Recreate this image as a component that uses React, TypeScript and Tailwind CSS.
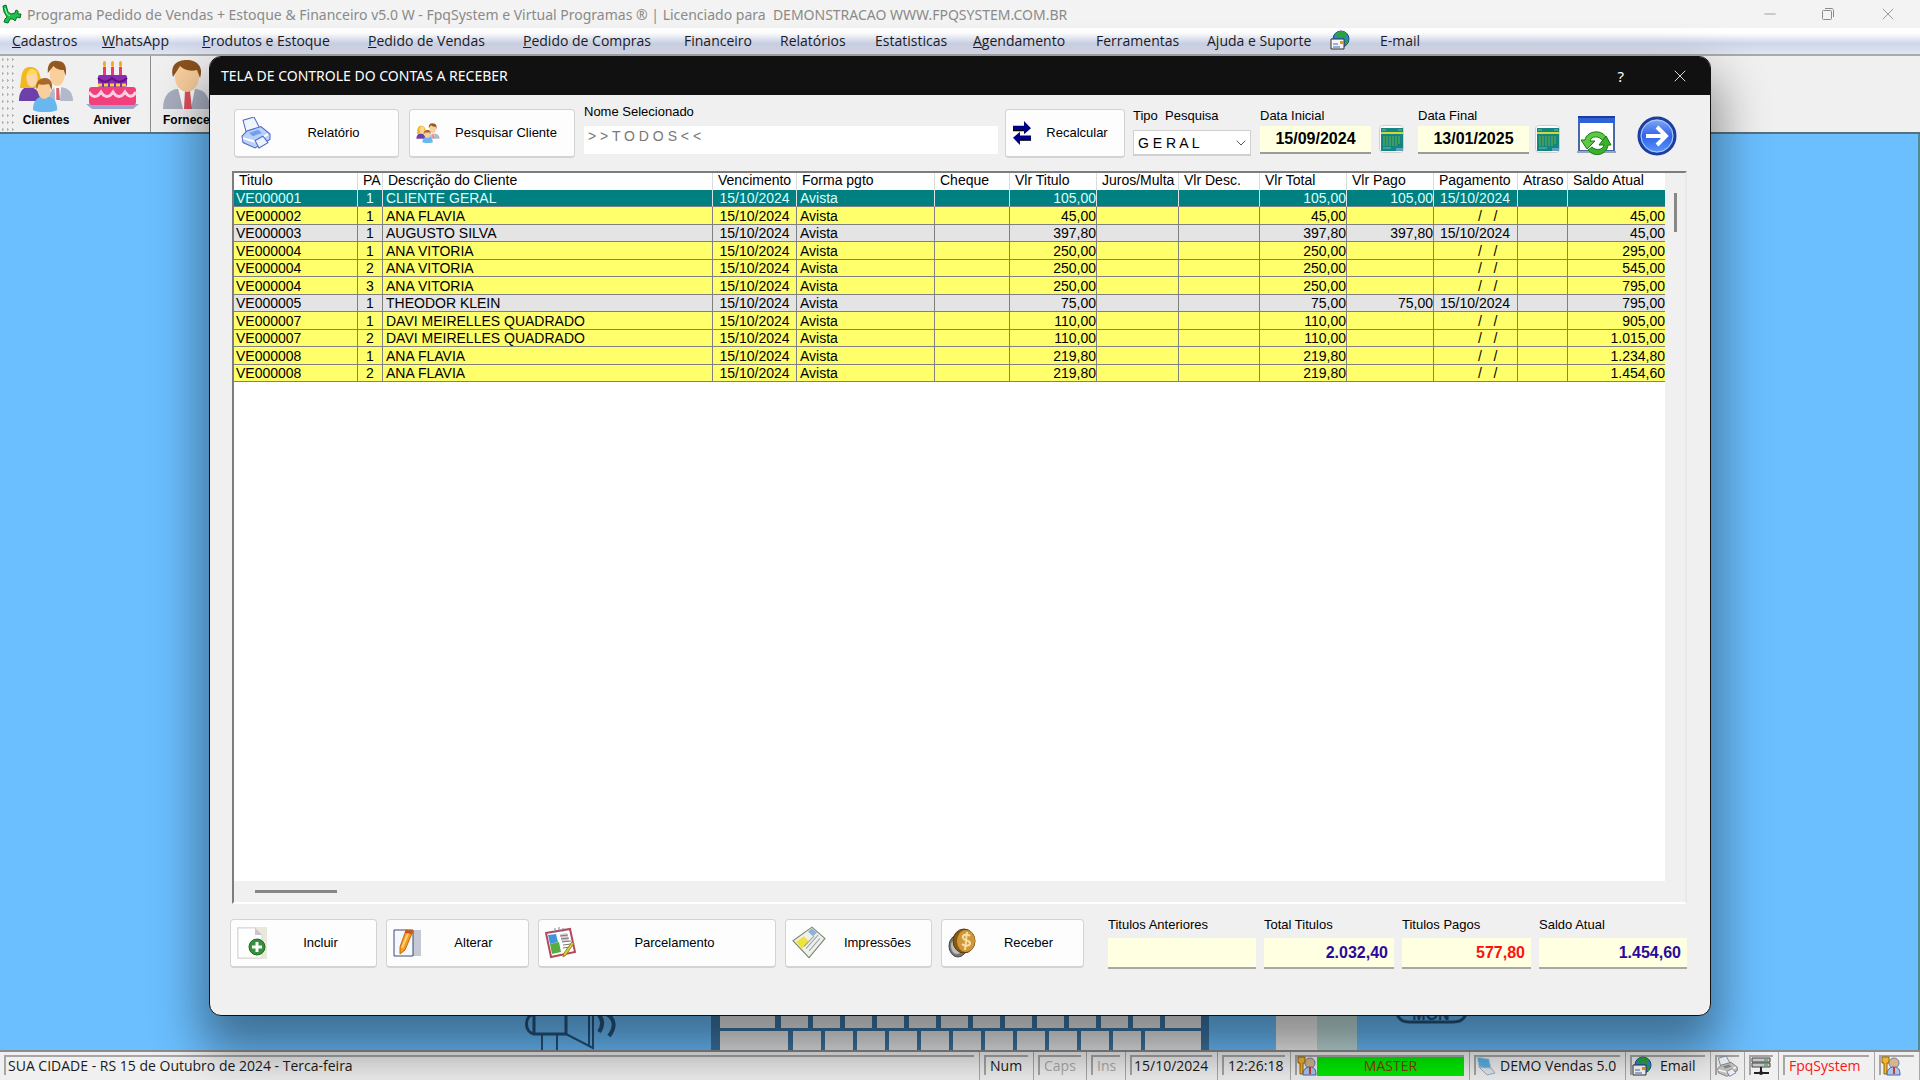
import { ReactNode } from 'react';
import clsx from 'clsx';
import { ChevronDown, Minus, X } from 'lucide-react';

/* ---------- icons ---------- */

function LogoIcon() {
  return (
    <svg width="20" height="20" viewBox="0 0 20 20">
      <path d="M1 2l3-1 2 7 3 2 4-1 1-3 2 1v3l3 0-1 4-3-1-2 4-2-2-3 0-2 4-4-1 1-3 2-2-3-5z" fill="#1fc04a" stroke="#0a6b25" strokeWidth="1" />
      <path d="M3 4l2 6 3 2" stroke="#8dffaa" strokeWidth="1" fill="none" />
    </svg>
  );
}

function PeopleIcon({ size }: { size: number }) {
  return (
    <svg width={size} height={size - 4} viewBox="0 0 60 52" preserveAspectRatio="none">
      <path d="M33 41c0-9 4-14 11-14s15 3 15 14z" fill="#b4b8cb" />
      <path d="M39 27l3-2 4 2-1 14h-5z" fill="#fff" />
      <path d="M41 28h3l1 12h-4z" fill="#e2606a" />
      <ellipse cx="42" cy="15" rx="8" ry="11" fill="#f9cf9d" />
      <path d="M32 13c-1-9 4-13 10-12 7 0 11 4 9 15l-2-6c-6 0-9-2-11-4z" fill="#93591f" />
      <path d="M1 41c0-10 5-14 10-14s12 2 14 14z" fill="#6d3fa9" />
      <path d="M2 28c2-8 0-20 10-21 11-1 13 9 13 21z" fill="#f3b820" />
      <ellipse cx="15" cy="18" rx="6" ry="9" fill="#fbd6aa" />
      <path d="M9 16c1-6 7-8 12-4l-3 2z" fill="#ffd95c" />
      <path d="M16 50c0-9 5-14 13-14s13 5 13 14c-6 3-20 3-26 0z" fill="#69b7ef" />
      <ellipse cx="28" cy="30" rx="7" ry="9" fill="#f9cf9d" />
      <path d="M20 30c-2-8 3-12 9-12s9 5 7 12l-3-6c-5 1-9 1-11 0z" fill="#a9692b" />
    </svg>
  );
}

function CakeIcon() {
  return (
    <svg width="53" height="50" viewBox="0 0 53 50">
      <g fill="#e63c78">
        <rect x="17" y="7" width="3" height="12" />
        <rect x="25" y="7" width="3" height="12" />
        <rect x="33" y="7" width="3" height="12" />
      </g>
      <g fill="#f5a623">
        <ellipse cx="18.500" cy="4" rx="1.500" ry="3" />
        <ellipse cx="26.500" cy="4" rx="1.500" ry="3" />
        <ellipse cx="34.500" cy="4" rx="1.500" ry="3" />
      </g>
      <path d="M0 44h53l-6 5H6z" fill="#98a9d0" />
      <rect x="3" y="27" width="47" height="18" rx="3" fill="#f2407f" />
      <path d="M3 32c4 6 8 6 12 0 4 6 8 6 12 0 4 6 8 6 12 0 4 6 8 5 11 0" stroke="#ffd3e2" strokeWidth="3" fill="none" />
      <rect x="12" y="15" width="29" height="12" rx="2" fill="#8b2bb0" />
      <path d="M12 25h29" stroke="#f8d33f" strokeWidth="3" strokeDasharray="4 2" />
      <path d="M12 18c5 5 9 5 14 0 5 5 10 5 15 0" stroke="#5b1485" strokeWidth="2" fill="none" />
    </svg>
  );
}

function SupplierIcon() {
  return (
    <svg width="47" height="50" viewBox="0 0 47 50" className="shrink-0">
      <path d="M0 49c0-13 6-19 14-20h19c9 1 14 8 14 20z" fill="#a9aec0" />
      <path d="M15 28h17l-4 21h-8z" fill="#fff" />
      <path d="M22 31h5l2 18h-8z" fill="#e0525f" />
      <ellipse cx="24" cy="17" rx="12" ry="15" fill="#f9cf9d" />
      <path d="M10 17C7 5 14 0 24 0s17 7 13 18l-3-8c-8 2-14-1-17-4z" fill="#8a521d" />
    </svg>
  );
}

function PrinterIcon({ gray }: { gray?: boolean }) {
  const stroke = gray ? '#666' : '#4b67c8';
  const fill = gray ? '#c4c4c4' : '#b9d0f8';
  return (
    <svg width={gray ? 21 : 30} height={gray ? 21 : 32} viewBox="0 0 30 30" preserveAspectRatio="none" className="shrink-0">
      <path d="M2 3l11-3 6 11-13 6z" fill="#eef5ff" stroke={stroke} />
      <path d="M1 18l5-5 14-4 9 7v5l-15 8L2 24z" fill={fill} stroke={stroke} />
      <path d="M2 20l12 3 13-7" stroke="#fff" strokeWidth="2" fill="none" />
      <path d="M14 22l8-4 5 6-9 5z" fill="#eaf3ff" stroke={stroke} />
      <path d="M8 15l9-3 4 3-9 3z" fill={gray ? '#888' : '#6fa0ee'} />
    </svg>
  );
}

function SwapIcon() {
  return (
    <svg width="20" height="24" viewBox="0 0 20 20" preserveAspectRatio="none">
      <path d="M1 4h11V0l7 6-7 5V8H1z" fill="#000085" />
      <path d="M19 12H8V9l-7 5 7 6v-4h11z" fill="#000085" />
      <path d="M1 8h11M8 16h11" stroke="#000" strokeWidth="1" />
    </svg>
  );
}

function SheetIcon() {
  return (
    <svg width="22" height="24" viewBox="0 0 22 24">
      <path d="M0 1h22v21h-5v2H0z" fill="#12877f" />
      <path d="M0 6h22" stroke="#d4d53a" strokeWidth="2" />
      <path d="M3 9v10M6 9v10M9 9v10M12 9v10M15 9v10M18 9v8" stroke="#6fae45" strokeWidth="1" />
      <path d="M1 3h4M17 3h4M2 21h8" stroke="#67bdb8" strokeWidth="1" />
      <path d="M15 21h7v3h-7z" fill="#5fa0bd" />
    </svg>
  );
}

function RefreshWindowIcon() {
  return (
    <svg width="40" height="40" viewBox="0 0 40 40">
      <rect x="2" y="1" width="35" height="34" fill="#fff" stroke="#4a68a8" strokeWidth="2" />
      <rect x="1" y="0" width="37" height="7" fill="#2f62d6" />
      <path d="M1 1h37" stroke="#1c3f9c" strokeWidth="2" />
      <path d="M0 35h39v2H0z" fill="#9aa3b8" />
      <path d="M13 25h5l-8 8-6-9h4c1-8 15-12 21-3l-3 4c-4-6-12-5-13 0z" fill="#5cc845" stroke="#157a12" />
      <path d="M27 29h-5l7-9 5 9h-3c-1 10-14 13-20 5l4-3c4 4 11 3 12-2z" fill="#3ab02c" stroke="#157a12" />
    </svg>
  );
}

function GoIcon() {
  return (
    <svg width="40" height="40" viewBox="0 0 40 40">
      <defs>
        <linearGradient id="go" x1="0" y1="0" x2="0" y2="1">
          <stop offset="0" stopColor="#86aef8" />
          <stop offset="0.5" stopColor="#2f62e6" />
          <stop offset="1" stopColor="#5d9cff" />
        </linearGradient>
      </defs>
      <circle cx="20" cy="20" r="18" fill="url(#go)" stroke="#1c3e9e" strokeWidth="3" />
      <circle cx="20" cy="20" r="16" fill="none" stroke="#b9cffb" strokeWidth="1" />
      <path d="M9 20h20M20 11l9 9-9 9" stroke="#fff" strokeWidth="4" fill="none" />
    </svg>
  );
}

function AddPageIcon() {
  return (
    <svg width="30" height="32" viewBox="0 0 30 32">
      <path d="M0 0h30v32H0z" fill="#e9e8da" />
      <path d="M1 1h17l7 7v23H1z" fill="#fff" stroke="#d5d5d5" />
      <path d="M18 1l7 7h-7z" fill="#c9c6d2" />
      <circle cx="20" cy="20" r="8" fill="#35913a" stroke="#1f6a26" />
      <path d="M20 15v10M15 20h10" stroke="#fff" strokeWidth="3" />
    </svg>
  );
}

function EditIcon() {
  return (
    <svg width="28" height="30" viewBox="0 0 28 30">
      <path d="M8 2h20v26H8z" fill="#c3cad5" />
      <path d="M1 2h19v26H1z" fill="#f5f9ff" stroke="#3c4b70" />
      <path d="M13 2l7 1-8 19-5 4 0-7z" fill="#f79a1b" stroke="#c96a0a" />
      <path d="M16 3l-7 17" stroke="#ffd27a" strokeWidth="2" />
      <path d="M13 2l7 1-1 3-7-1z" fill="#c8541c" />
    </svg>
  );
}

function PlanIcon() {
  return (
    <svg width="31" height="32" viewBox="0 0 31 32">
      <path d="M1 6l24-4 5 23-24 5z" fill="#fff" stroke="#b3485b" strokeWidth="2" />
      <path d="M3 8l8-1 2 8-8 2z" fill="#4193dc" />
      <path d="M5 17l9-2 2 10-9 2z" fill="#55ad3e" />
      <path d="M15 7l7-1 2 8-7 1z" fill="#d9c9cf" />
      <path d="M15 9l8-1M16 12l8-1M17 15l9-1M18 18l8-1M18 21l7-1" stroke="#777" strokeWidth="1" />
      <path d="M10 1v5M14 0v5M18 1v4" stroke="#7d8796" strokeWidth="1" />
      <path d="M29 16l-8 12-3 2 1-4 8-11z" fill="#e0cf3a" stroke="#92861b" />
    </svg>
  );
}

function PrintsIcon() {
  return (
    <svg width="34" height="34" viewBox="0 0 34 30" preserveAspectRatio="none">
      <path d="M1 13L20 1l13 10-16 17z" fill="#eef0ea" stroke="#7a8476" />
      <path d="M4 14l8-5 5 5-7 6z" fill="#ece437" />
      <path d="M16 5l4-3 5 4-4 3z" fill="#8fb2d8" />
      <path d="M14 20l12-12M17 22l11-11M12 18L22 9" stroke="#9aa0a8" strokeWidth="1" />
    </svg>
  );
}

function CoinsIcon() {
  return (
    <svg width="28" height="30" viewBox="0 0 28 30">
      <ellipse cx="10" cy="18" rx="9" ry="11" fill="#777" stroke="#444" />
      <ellipse cx="9" cy="18" rx="6" ry="8" fill="#bdbdbd" />
      <ellipse cx="16" cy="13" rx="11" ry="12" fill="#8a5a12" stroke="#5a390a" />
      <ellipse cx="18" cy="13" rx="9" ry="11" fill="#d0963a" />
      <path d="M22 8c-3-3-8-1-7 2s7 2 7 5-5 4-8 1M19 4l-2 18" stroke="#f6e0a6" strokeWidth="2" fill="none" />
    </svg>
  );
}

function GlobeMailIcon() {
  return (
    <svg width="20" height="20" viewBox="0 0 20 20" className="shrink-0">
      <circle cx="11" cy="9" r="8" fill="#2f86d6" stroke="#164f8c" />
      <path d="M5 4c3-4 9-4 12 0l-2 5-4-3-3 2zM15 11l4-2-3 7z" fill="#2da43f" />
      <path d="M1 9h13v10H1z" fill="#fff" stroke="#333" />
      <path d="M3 17h7M3 14h5" stroke="#3c6fc4" strokeWidth="1" />
      <path d="M10 11h3v3h-3z" fill="#ef9a27" />
    </svg>
  );
}

function KeyUserIcon() {
  return (
    <svg width="20" height="20" viewBox="0 0 20 20" className="shrink-0">
      <path d="M1 1h7v6H6v11H3V7H1z" fill="#f2b431" stroke="#91640e" />
      <circle cx="13" cy="7" r="5" fill="#dcb48b" stroke="#6b7fa8" />
      <path d="M6 19c0-6 3-8 7-8s6 2 6 8z" fill="#a9c6ef" stroke="#4766a4" />
      <path d="M12 11h2v7h-2z" fill="#d43a2c" />
    </svg>
  );
}

function MonitorIcon() {
  return (
    <svg width="20" height="20" viewBox="0 0 20 20" className="shrink-0">
      <path d="M1 1l12 2 2 9-12-1z" fill="#5ab3e6" stroke="#bcd5e6" />
      <path d="M3 11l12 1 4 5-8 2z" fill="#dfe7ee" stroke="#9fb0bf" />
    </svg>
  );
}

function NetworkIcon() {
  return (
    <svg width="20" height="20" viewBox="0 0 20 20">
      <path d="M1 2h18v4H1zM1 7h18v4H1z" fill="#c8c8c8" stroke="#444" />
      <path d="M13 4h4M13 9h4" stroke="#1e9a3a" strokeWidth="1" />
      <path d="M10 11v5M3 17h15" stroke="#222" strokeWidth="2" />
      <circle cx="10" cy="17" r="2" fill="#222" />
    </svg>
  );
}

/* ---------- data ---------- */

const menu = [
  { label: 'Cadastros', accel: true, width: 'w-[90px]' },
  { label: 'WhatsApp', accel: true, width: 'w-[100px]' },
  { label: 'Produtos e Estoque', accel: true, width: 'w-[166px]' },
  { label: 'Pedido de Vendas', accel: true, width: 'w-[155px]' },
  { label: 'Pedido de Compras', accel: true, width: 'w-[161px]' },
  { label: 'Financeiro', width: 'w-[96px]' },
  { label: 'Relatórios', width: 'w-[95px]' },
  { label: 'Estatisticas', width: 'w-[98px]' },
  { label: 'Agendamento', accel: true, width: 'w-[123px]' },
  { label: 'Ferramentas', width: 'w-[111px]' },
  { label: 'Ajuda e Suporte', width: 'w-[123px]' },
];

const columns = [
  { label: 'Titulo', col: 'w-[124px]', cell: 'pl-[2px]' },
  { label: 'PA', col: 'w-[25px]', cell: 'text-center' },
  { label: 'Descrição do Cliente', col: '', cell: 'pl-[3px]' },
  { label: 'Vencimento', col: 'w-[84px]', cell: 'text-center' },
  { label: 'Forma pgto', col: 'w-[138px]', cell: 'pl-[3px]' },
  { label: 'Cheque', col: 'w-[75px]', cell: '' },
  { label: 'Vlr Titulo', col: 'w-[87px]', cell: 'text-right' },
  { label: 'Juros/Multa', col: 'w-[82px]', cell: 'text-right' },
  { label: 'Vlr Desc.', col: 'w-[81px]', cell: 'text-right' },
  { label: 'Vlr Total', col: 'w-[87px]', cell: 'text-right' },
  { label: 'Vlr Pago', col: 'w-[87px]', cell: 'text-right' },
  { label: 'Pagamento', col: 'w-[84px]', cell: 'pl-[6px]' },
  { label: 'Atraso', col: 'w-[50px]', cell: '' },
  { label: 'Saldo Atual', col: 'w-[97px]', cell: 'text-right' },
];

type Titulo = { id: string; pa: number; cliente: string; valor: string; pago?: boolean; saldo: string };

const titulos: Titulo[] = [
  { id: 'VE000001', pa: 1, cliente: 'CLIENTE GERAL', valor: '105,00', pago: true, saldo: '' },
  { id: 'VE000002', pa: 1, cliente: 'ANA FLAVIA', valor: '45,00', saldo: '45,00' },
  { id: 'VE000003', pa: 1, cliente: 'AUGUSTO SILVA', valor: '397,80', pago: true, saldo: '45,00' },
  { id: 'VE000004', pa: 1, cliente: 'ANA VITORIA', valor: '250,00', saldo: '295,00' },
  { id: 'VE000004', pa: 2, cliente: 'ANA VITORIA', valor: '250,00', saldo: '545,00' },
  { id: 'VE000004', pa: 3, cliente: 'ANA VITORIA', valor: '250,00', saldo: '795,00' },
  { id: 'VE000005', pa: 1, cliente: 'THEODOR KLEIN', valor: '75,00', pago: true, saldo: '795,00' },
  { id: 'VE000007', pa: 1, cliente: 'DAVI MEIRELLES QUADRADO', valor: '110,00', saldo: '905,00' },
  { id: 'VE000007', pa: 2, cliente: 'DAVI MEIRELLES QUADRADO', valor: '110,00', saldo: '1.015,00' },
  { id: 'VE000008', pa: 1, cliente: 'ANA FLAVIA', valor: '219,80', saldo: '1.234,80' },
  { id: 'VE000008', pa: 2, cliente: 'ANA FLAVIA', valor: '219,80', saldo: '1.454,60' },
];

/* ---------- pieces ---------- */

function ActionButton({ icon, label, className }: { icon: ReactNode; label: string; className?: string }) {
  return (
    <button type="button" className={clsx('flex h-[49px] items-center rounded-[4px] border border-b-2 border-[#d3d3d3] bg-[#fdfdfd] px-1.5', className)}>
      {icon}
      <span className="flex-1 whitespace-nowrap pl-1 text-center">{label}</span>
    </button>
  );
}

function DateField({ id, label, value }: { id: string; label: string; value: string }) {
  return (
    <div className="mt-[5px] flex w-[111px] flex-col">
      <label htmlFor={id} className="h-4">{label}</label>
      <input id={id} defaultValue={value} className="mt-0.5 h-7 w-full border-b-2 border-[#9b9b9b] bg-[#ffffe1] text-center text-base font-bold text-black outline-none" />
    </div>
  );
}

function TotalField({ id, label, value, width, color }: { id: string; label: string; value: string; width: string; color?: string }) {
  return (
    <div className={clsx('ml-2 flex flex-col', width)}>
      <label htmlFor={id} className="h-4">{label}</label>
      <input id={id} readOnly value={value} className={clsx('mt-[5px] h-[31px] w-full border-b-2 border-[#a8a8a8] bg-[#ffffe1] px-1.5 text-right text-base font-bold outline-none', color)} />
    </div>
  );
}

function StatusPanel({ children, className }: { children?: ReactNode; className?: string }) {
  return (
    <div className={clsx('flex h-full border-r border-[#a9a9a9] pb-[5px] pl-1 pr-[5px] pt-[3px]', className)}>
      <div className="flex min-w-0 flex-1 items-center border-l-2 border-t-2 border-[#a6a6a6] whitespace-nowrap">{children}</div>
    </div>
  );
}

function Grid() {
  return (
    <div className="ml-0.5 flex flex-1 flex-col border-2 border-b-white border-l-[#7d7d7d] border-r-[#e8e8e8] border-t-[#7d7d7d]">
      <div className="flex flex-1">
        <div className="flex-1 bg-white">
          <table className="w-full table-fixed border-separate border-spacing-0 whitespace-nowrap text-[14px] leading-4">
            <colgroup>
              {columns.map((c) => <col key={c.label} className={c.col} />)}
            </colgroup>
            <thead>
              <tr>
                {columns.map((c) => (
                  <th key={c.label} className="h-[17px] border-r border-[#dcdcdc] p-0 pl-[5px] text-left align-top font-normal leading-[15px] last:border-r-0">{c.label}</th>
                ))}
              </tr>
            </thead>
            <tbody>
              {titulos.map((t, i) => {
                const cells = [
                  t.id, t.pa, t.cliente, '15/10/2024', 'Avista', '', t.valor, '', '', t.valor,
                  t.pago ? t.valor : '',
                  t.pago ? '15/10/2024' : <span className="pl-[38px] whitespace-pre">/   /</span>,
                  '', t.saldo,
                ];
                return (
                  <tr
                    key={i}
                    className={clsx(
                      i === 0 ? 'bg-[#008080] text-[#d9ffff]' : t.pago ? 'bg-[#e4e4e4]' : 'bg-[#ffff6b]',
                      i % 2 === 0 ? 'h-[17px]' : 'h-[18px]',
                    )}
                  >
                    {cells.map((value, n) => (
                      <td
                        key={n}
                        className={clsx(
                          'border-b border-r p-0 last:border-r-0',
                          i === 0 ? 'border-b-[#808080] border-r-[#e0e0e0]' : 'border-[#808080]',
                          columns[n].cell,
                        )}
                      >
                        {value}
                      </td>
                    ))}
                  </tr>
                );
              })}
            </tbody>
          </table>
        </div>
        <div className="flex w-5 justify-center pt-5">
          <div className="h-[39px] w-[3px] bg-[#8c8787]" />
        </div>
      </div>
      <div className="flex h-[21px] items-center pl-[21px]">
        <div className="h-[3px] w-[82px] bg-[#868686]" />
      </div>
    </div>
  );
}

function Wallpaper() {
  const row1 = Array.from({ length: 11 }, (_, i) => 813 + i * 32);
  const row2 = Array.from({ length: 11 }, (_, i) => 793 + i * 32);
  return (
    <svg viewBox="0 0 1918 36" className="w-full">
      <g fill="none" stroke="#24557f" strokeWidth="3">
        <path d="M534 0v20h32V0M534 0c-10 2-10 18 0 20" />
        <path d="M566 20l27 14V0M542 20v16M557 20v16M589 0v32" strokeWidth="2" />
        <path d="M598 0c6 6 5 12 1 18M607 0c9 6 8 14 2 22" strokeWidth="4" />
      </g>
      <path d="M711 0h498v36H711z" fill="#3d78a8" />
      <g fill="#e9ebed">
        <path d="M720 0h55v14h-55zM781 0h27v14h-27zM1165 0h36v14h-36zM720 17h68v19h-68zM1145 17h56v19h-56z" />
        {row1.map((x) => <rect key={x} x={x} y="0" width="27" height="14" />)}
        {row2.map((x) => <rect key={x} x={x} y="17" width="28" height="19" />)}
      </g>
      <path d="M1276 0h41v36h-41z" fill="#f2f2f2" />
      <path d="M1317 0h40v36h-40z" fill="#c0dddd" />
      <path d="M1397 0c2 6 6 8 12 8h44c6 0 11-2 13-8" fill="none" stroke="#24557f" strokeWidth="3" />
      <text x="1431" y="6" textAnchor="middle" fontSize="16" fontWeight="700" fill="#24557f">MON</text>
    </svg>
  );
}

function ReceivablesDialog() {
  return (
    <section
      role="dialog"
      aria-label="Contas a receber"
      className="absolute inset-x-[209px] bottom-16 top-14 flex flex-col overflow-hidden rounded-xl border border-[#111] bg-[#f0f0f0] text-[13px] leading-4 text-black shadow-[0_28px_50px_8px_rgba(0,0,0,0.42)]"
    >
      <header className="flex h-[38px] shrink-0 items-center bg-[#111] pl-[11px] pr-5 font-['Noto_Sans',sans-serif] text-white">
        <h1 className="flex-1 text-[14px]">TELA DE CONTROLE DO CONTAS A RECEBER</h1>
        <button type="button" className="mr-[46px] text-[15px]">?</button>
        <button type="button" aria-label="Fechar"><X size={20} strokeWidth={1} /></button>
      </header>

      <div className="flex flex-1 flex-col pl-5 pr-[23px]">
        <div className="flex h-[76px] items-start pl-1 pr-[10px] pt-2">
          <ActionButton icon={<PrinterIcon />} label="Relatório" className="mt-1.5 w-[165px]" />
          <ActionButton icon={<PeopleIcon size={24} />} label="Pesquisar Cliente" className="ml-2.5 mt-1.5 w-[166px]" />
          <div className="ml-[9px] mt-px flex flex-1 flex-col">
            <label htmlFor="nome" className="h-4">Nome Selecionado</label>
            <input id="nome" defaultValue="> > T O D O S < <" className="mt-1.5 h-7 w-full bg-white px-1 pb-2 text-[14px] text-[#777] outline-none" />
          </div>
          <ActionButton icon={<SwapIcon />} label="Recalcular" className="ml-[7px] mt-1.5 w-[120px]" />
          <div className="ml-2 mt-[5px] flex w-[118px] flex-col">
            <label htmlFor="tipo" className="h-4 whitespace-pre">Tipo  Pesquisa</label>
            <div className="relative mt-1.5">
              <select id="tipo" className="h-[26px] w-full appearance-none border border-b-2 border-[#d0d0d0] bg-white pl-1 text-[14px] outline-none">
                <option>G E R A L</option>
              </select>
              <ChevronDown size={16} strokeWidth={1} className="pointer-events-none absolute right-0.5 top-[5px]" />
            </div>
          </div>
          <div className="ml-[9px]"><DateField id="inicio" label="Data Inicial" value="15/09/2024" /></div>
          <button type="button" aria-label="Calendário inicial" className="ml-2 mt-[22px] flex h-7 w-[25px] items-center justify-center rounded border border-[#d0d0d0] bg-white"><SheetIcon /></button>
          <div className="ml-3.5"><DateField id="fim" label="Data Final" value="13/01/2025" /></div>
          <button type="button" aria-label="Calendário final" className="ml-1.5 mt-[22px] flex h-7 w-[25px] items-center justify-center rounded border border-[#d0d0d0] bg-white"><SheetIcon /></button>
          <button type="button" aria-label="Atualizar" className="ml-[17px] mt-[13px]"><RefreshWindowIcon /></button>
          <button type="button" aria-label="Avançar" className="ml-5 mt-[13px]"><GoIcon /></button>
        </div>

        <Grid />

        <div className="flex h-[111px] items-start pt-[13px]">
          <ActionButton icon={<AddPageIcon />} label="Incluir" className="mt-0.5 w-[147px]" />
          <ActionButton icon={<EditIcon />} label="Alterar" className="ml-[9px] mt-0.5 w-[143px]" />
          <ActionButton icon={<PlanIcon />} label="Parcelamento" className="ml-[9px] mt-0.5 flex-1" />
          <ActionButton icon={<PrintsIcon />} label="Impressões" className="ml-[9px] mt-0.5 w-[147px]" />
          <ActionButton icon={<CoinsIcon />} label="Receber" className="ml-[9px] mr-4 mt-0.5 w-[143px]" />
          <TotalField id="anteriores" label="Titulos Anteriores" value="" width="w-[148px]" />
          <TotalField id="total" label="Total Titulos" value="2.032,40" width="w-[130px]" color="text-[#2a0a9c]" />
          <TotalField id="pagos" label="Titulos Pagos" value="577,80" width="w-[129px]" color="text-[#ff1010]" />
          <TotalField id="saldo" label="Saldo Atual" value="1.454,60" width="w-[148px]" color="text-[#2a0a9c]" />
        </div>
      </div>
    </section>
  );
}

export default function App() {
  return (
    <div className="relative flex h-screen flex-col overflow-hidden bg-[#6bbfff] font-['Liberation_Sans',Arial,sans-serif]">
      <header className="flex h-7 shrink-0 items-center bg-[#f3f3f3] pl-0.5 pr-[22px] font-['Noto_Sans',sans-serif] text-[14px] text-[#8a8a8a]">
        <LogoIcon />
        <span className="flex-1 whitespace-pre pl-[5px]">
          Programa Pedido de Vendas + Estoque &amp; Financeiro v5.0 W - FpqSystem e Virtual Programas ® | Licenciado para  DEMONSTRACAO WWW.FPQSYSTEM.COM.BR
        </span>
        <button type="button" aria-label="Minimizar"><Minus size={18} strokeWidth={1} /></button>
        <button type="button" aria-label="Restaurar" className="ml-[41px]">
          <svg width="16" height="16" viewBox="0 0 16 16" fill="none" stroke="currentColor">
            <rect x="2.500" y="4.500" width="9" height="9" rx="1" />
            <path d="M5 2.500h7c1 0 1.500 1 1.500 2V11" />
          </svg>
        </button>
        <button type="button" aria-label="Fechar programa" className="ml-[42px]"><X size={20} strokeWidth={1} /></button>
      </header>

      <nav className="flex h-[26px] shrink-0 items-center bg-gradient-to-b from-white from-20% via-[#cfd6ea] via-60% to-[#e1e5f1] pb-0.5 pl-3 font-['Open_Sans',sans-serif] text-[14px] text-[#1c1c28]">
        {menu.map(({ label, accel, width }) => (
          <button key={label} type="button" className={clsx('whitespace-nowrap text-left', width)}>
            {accel ? <><u>{label[0]}</u>{label.slice(1)}</> : label}
          </button>
        ))}
        <GlobeMailIcon />
        <button type="button" className="ml-[30px]">E-mail</button>
      </nav>

      <div className="flex h-20 shrink-0 border-b-2 border-t-2 border-b-[#57707e] border-t-[#a9a9b0] bg-[#f0f0f0] text-[12px] font-bold leading-4 text-black">
        <div className="w-[14px] bg-[radial-gradient(#b5b5b5_1px,transparent_1px)] bg-[length:5px_7px]" />
        <button type="button" className="flex w-16 flex-col items-center pt-1">
          <PeopleIcon size={56} />
          <span>Clientes</span>
        </button>
        <button type="button" className="flex w-[68px] flex-col items-center pt-1">
          <CakeIcon />
          <span className="mt-0.5">Aniver</span>
        </button>
        <div className="ml-1 w-px bg-[#8e8e8e]" />
        <button type="button" className="ml-3 flex flex-col items-start pt-1">
          <SupplierIcon />
          <span className="mt-0.5">Fornecedor</span>
        </button>
      </div>

      <main className="flex flex-1 items-end border-r-2 border-[#4f8b95]">
        <Wallpaper />
      </main>

      <footer className="flex h-[30px] shrink-0 border-t-2 border-[#8c8c8c] bg-[#f0f0f0] font-['Open_Sans',sans-serif] text-[14px] leading-4 text-[#1a1a1a]">
        <StatusPanel className="flex-1"><span className="pl-0.5">SUA CIDADE - RS 15 de Outubro de 2024 - Terca-feira</span></StatusPanel>
        <StatusPanel className="w-[54px]"><span className="pl-1">Num</span></StatusPanel>
        <StatusPanel className="w-[53px]"><span className="pl-1 text-[#ababab]">Caps</span></StatusPanel>
        <StatusPanel className="w-[39px]"><span className="pl-1 text-[#ababab]">Ins</span></StatusPanel>
        <StatusPanel className="w-[92px]"><span className="pl-0.5">15/10/2024</span></StatusPanel>
        <StatusPanel className="w-[73px]"><span className="pl-1">12:26:18</span></StatusPanel>
        <StatusPanel className="w-[179px]">
          <KeyUserIcon />
          <span className="flex h-[19px] flex-1 items-center justify-center bg-[#00ec00] text-[#8b3a00]">MASTER</span>
        </StatusPanel>
        <StatusPanel className="w-[156px]"><MonitorIcon /><span className="pl-1">DEMO Vendas 5.0</span></StatusPanel>
        <StatusPanel className="w-[85px]"><GlobeMailIcon /><span className="pl-2">Email</span></StatusPanel>
        <StatusPanel className="w-[34px]"><PrinterIcon gray /></StatusPanel>
        <StatusPanel className="w-[34px]"><NetworkIcon /></StatusPanel>
        <StatusPanel className="w-24"><span className="pl-1 text-[#ff1414]">FpqSystem</span></StatusPanel>
        <StatusPanel className="w-[45px]"><KeyUserIcon /></StatusPanel>
      </footer>

      <ReceivablesDialog />
    </div>
  );
}
